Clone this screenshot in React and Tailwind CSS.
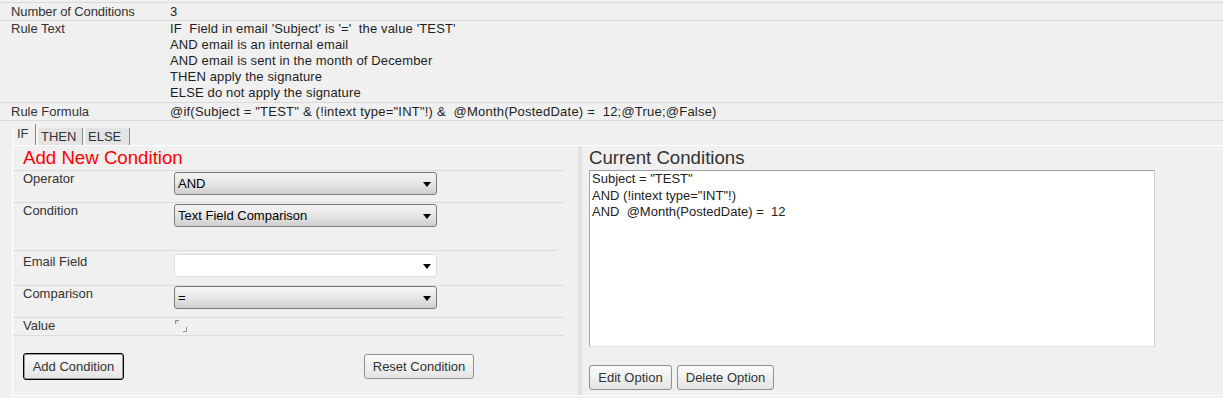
import React from "react";

function Arrow() {
  return (
    <svg className="absolute right-[5px] top-[9px]" width="8" height="5" viewBox="0 0 8 5">
      <path d="M0 0H8L4 5Z" fill="#000" />
    </svg>
  );
}

function Select({ value, white }) {
  return (
    <div
      className={
        white
          ? "relative w-[263px] h-[23px] rounded-[3px] border border-[#dedede] bg-white flex items-center pl-[3px] text-[13px] text-black"
          : "relative w-[263px] h-[23px] rounded-[3px] border border-[#7a7a7a] bg-linear-to-b from-[#f5f5f5] via-[#e6e6e6] to-[#cfcfcf] flex items-center pl-[3px] text-[13px] text-black"
      }
    >
      {value}
      <Arrow />
    </div>
  );
}

function Btn({ children, className = "" }) {
  return (
    <button
      className={
        "h-[25px] rounded-[3px] bg-linear-to-b from-[#fbfbfb] to-[#e4e4e4] text-[13px] text-[#333] leading-none " +
        className
      }
    >
      {children}
    </button>
  );
}

export default function App() {
  return (
    <div className="w-[1223px] h-[398px] bg-[#f0f0f0] overflow-hidden font-['Liberation_Sans',Arial,sans-serif] text-[13px] text-[#1e1e1e]">
      {/* Top info rows */}
      <div className="pt-[2px]">
        <div className="border-t border-[#dadada] h-[18px] flex items-center pl-[11px]">
          <div className="w-[159px] text-[#333] tracking-[-0.1px]">Number of Conditions</div>
          <div>3</div>
        </div>
        <div className="border-t border-[#dadada] h-[82px] flex pl-[11px] leading-[16px]">
          <div className="w-[159px] text-[#333]">Rule Text</div>
          <div className="tracking-[0.14px]">
            <div>IF&nbsp; Field in email 'Subject' is '='&nbsp; the value 'TEST'</div>
            <div>AND email is an internal email</div>
            <div>AND email is sent in the month of December</div>
            <div>THEN apply the signature</div>
            <div>ELSE do not apply the signature</div>
          </div>
        </div>
        <div className="border-t border-b border-[#dadada] h-[19px] flex items-center pl-[11px]">
          <div className="w-[159px] text-[#333]">Rule Formula</div>
          <div className="tracking-[0.22px]">@if(Subject = "TEST" &amp; (!intext type="INT"!) &amp;&nbsp; @Month(PostedDate) =&nbsp; 12;@True;@False)</div>
        </div>
      </div>

      {/* Tabs */}
      <div className="h-[24px] flex items-end pl-[13px] text-[13px] text-[#333]">
        <div className="h-[21px] w-[23px] border-l border-white border-r border-r-[#8a8a8a] pl-[3px] pt-[1px] leading-[18px] bg-[#f0f0f0]">IF</div>
        <div className="h-[17px] ml-[1px] w-[46px] border-l border-white border-r border-r-[#8a8a8a] pl-[3px] bg-[#e4e4e4] leading-[17px]">THEN</div>
        <div className="h-[17px] ml-[1px] w-[46px] border-l border-white border-r border-r-[#8a8a8a] pl-[3px] bg-[#e4e4e4] leading-[17px]">ELSE</div>
      </div>

      {/* Panel */}
      <div className="ml-[12px] h-[251px] border-t border-l border-b border-white flex">
        {/* Left column */}
        <div className="w-[565px] flex flex-col">
          <div className="h-[24px] pl-[10px] text-[18.67px] leading-[24px] text-[#ff0000]">Add New Condition</div>
          <div className="mr-[14px] border-t border-[#dcdcdc] h-[32px] flex text-[13px] leading-[16px] text-[#333]">
            <div className="w-[161px] pl-[10px]">Operator</div>
            <div className="pt-[1px]"><Select value="AND" /></div>
          </div>
          <div className="mr-[14px] border-t border-[#dcdcdc] h-[48px] flex text-[13px] leading-[16px] text-[#333]">
            <div className="w-[161px] pl-[10px]">Condition</div>
            <div className="pt-[1px]"><Select value="Text Field Comparison" /></div>
          </div>
          <div className="mr-[21px] border-t border-[#dcdcdc] h-[35px] flex text-[13px] leading-[16px] text-[#333]">
            <div className="w-[161px] pl-[10px] pt-[3px]">Email Field</div>
            <div className="pt-[3px]"><Select value="" white /></div>
          </div>
          <div className="mr-[14px] border-t border-[#dcdcdc] h-[32px] flex text-[13px] leading-[16px] text-[#333]">
            <div className="w-[161px] pl-[10px]">Comparison</div>
            <div><Select value="=" /></div>
          </div>
          <div className="mr-[14px] border-t border-b border-[#dcdcdc] h-[19px] flex text-[13px] leading-[16px] text-[#333]">
            <div className="w-[161px] pl-[10px]">Value</div>
            <div className="pt-[1px]">
              <svg width="14" height="13" viewBox="0 0 14 13">
                <path d="M1.5 5V1.5H5" stroke="#8a8a8a" strokeWidth="1" fill="none" />
                <path d="M2.5 5V2.5H5" stroke="#d8d8d8" strokeWidth="1" fill="none" />
                <path d="M12.5 8V12.5H9" stroke="#8a8a8a" strokeWidth="1" fill="none" />
                <path d="M11.5 8V11.5H9" stroke="#ffffff" strokeWidth="1" fill="none" />
              </svg>
            </div>
          </div>
          <div className="flex items-start pl-[10px] pt-[17px]">
            <Btn className="w-[101px] h-[27px] border border-black shadow-[inset_0_0_0_1px_#9a9a9a]">Add Condition</Btn>
            <Btn className="ml-[240px] mt-[1px] w-[110px] h-[25px] border border-[#8f8f8f]">Reset Condition</Btn>
          </div>
        </div>
        {/* Divider */}
        <div className="w-[4px] bg-[#e2e2e2]" />
        {/* Right column */}
        <div className="flex-1 pl-[7px] flex flex-col">
          <div className="h-[24px] text-[18.67px] leading-[24px] text-[#333]">Current Conditions</div>
          <div className="w-[566px] h-[177px] bg-white border border-t-[#9c9ca4] border-l-[#a8a8a8] border-r-[#d0d0d0] border-b-[#e0e0e0] pl-[2px] text-[13px] leading-[16.5px] text-[#222]">
            <div>Subject = "TEST"</div>
            <div>AND (!intext type="INT"!)</div>
            <div>AND&nbsp; @Month(PostedDate) =&nbsp; 12</div>
          </div>
          <div className="flex gap-[5px] mt-[18px]">
            <Btn className="w-[83px] border border-[#8f8f8f]">Edit Option</Btn>
            <Btn className="w-[97px] border border-[#8f8f8f]">Delete Option</Btn>
          </div>
        </div>
      </div>
    </div>
  );
}
